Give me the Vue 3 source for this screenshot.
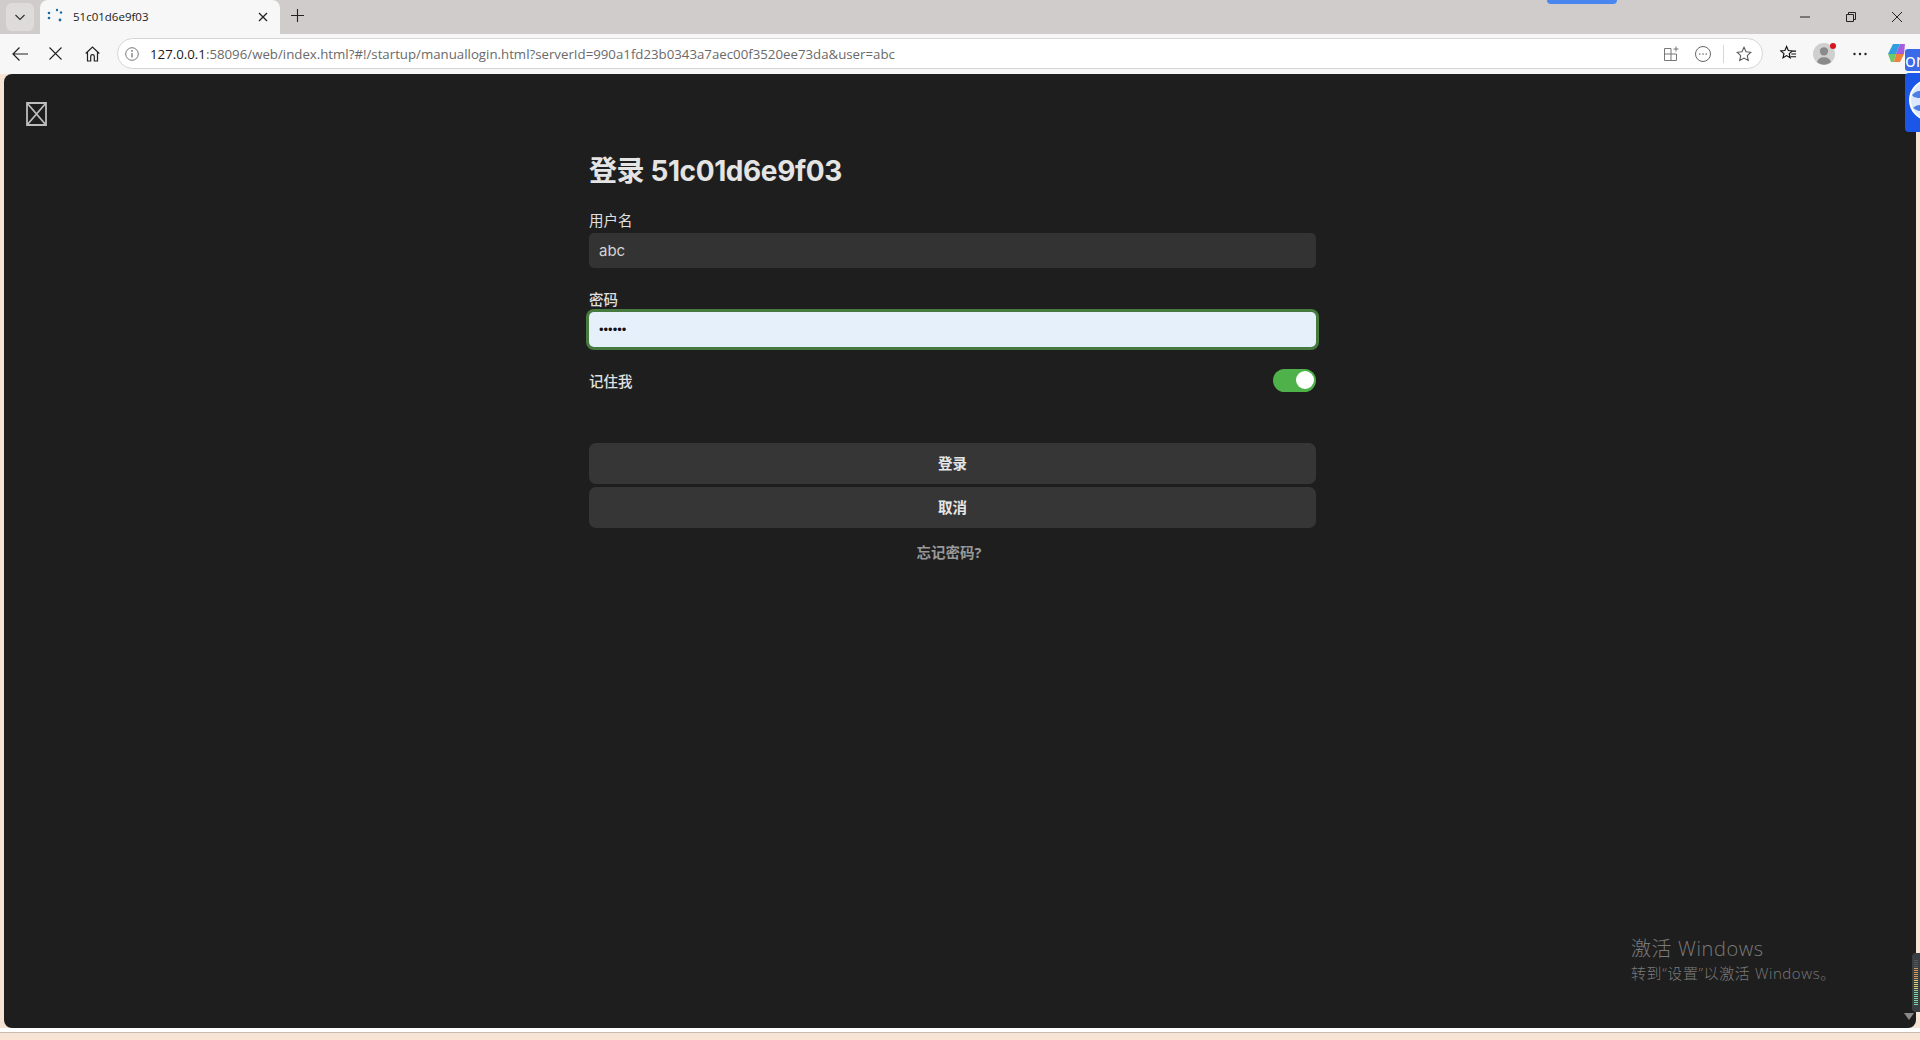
<script setup>
const ticks = Array.from({ length: 23 }, (_, i) =>
  i < 4 ? 'off' : i < 10 ? 'warm' : i < 15 ? 'yellow' : 'green'
)
</script>

<template>
  <div class="window">
    <div class="tabstrip">
      <div class="tabmenu">
        <svg width="14" height="14" viewBox="0 0 14 14"><path d="M2.5 5 7 9.5 11.5 5" fill="none" stroke="#333" stroke-width="1.2"/></svg>
      </div>
      <div class="tab">
        <svg class="spinner" width="16" height="16" viewBox="0 0 16 16" fill="#1d6a9e">
          <circle cx="2" cy="5" r="1.3"/><circle cx="2" cy="10" r="1.3"/><circle cx="10" cy="2" r="1.2"/><circle cx="14" cy="4.5" r="1.2"/><circle cx="13" cy="12" r="1.4"/>
        </svg>
        <span class="tabtitle">51c01d6e9f03</span>
        <svg class="tabclose" width="10" height="10" viewBox="0 0 10 10"><path d="M1 1l8 8M9 1L1 9" stroke="#222" stroke-width="1.3"/></svg>
      </div>
      <svg class="newtab" width="13" height="13" viewBox="0 0 13 13"><path d="M6.5 0v13M0 6.5h13" stroke="#222" stroke-width="1.1"/></svg>
      <div class="strip-space">
        <div class="pill"></div>
      </div>
      <div class="winbtns">
        <svg width="10" height="10" viewBox="0 0 10 10"><path d="M0 5h10" stroke="#222" stroke-width="1"/></svg>
        <svg width="10" height="10" viewBox="0 0 10 10"><path d="M.5 2.500h7v7h-7zM2.500 2.500V.5h7v7h-2" fill="none" stroke="#222" stroke-width="1"/></svg>
        <svg width="10" height="10" viewBox="0 0 10 10"><path d="M0 0l10 10M10 0L0 10" stroke="#222" stroke-width="1"/></svg>
      </div>
    </div>

    <div class="toolbar">
      <svg class="nav back" width="16" height="16" viewBox="0 0 16 16"><path d="M16 8H1M7.500 1.500 1 8l6.500 6.500" fill="none" stroke="#222" stroke-width="1.2"/></svg>
      <svg class="nav stop" width="13" height="13" viewBox="0 0 13 13"><path d="M.5.5l12 12M12.500.5l-12 12" stroke="#222" stroke-width="1.1"/></svg>
      <svg class="nav home" width="15" height="16" viewBox="0 0 15 16"><path d="M.7 7.500 7.500 1l6.800 6.500M2.500 6v9h3.200v-4.500a1.800 1.800 0 0 1 3.600 0V15h3.200V6" fill="none" stroke="#222" stroke-width="1.2"/></svg>
      <div class="address">
        <svg class="info" width="14" height="14" viewBox="0 0 14 14"><circle cx="7" cy="7" r="6.300" fill="none" stroke="#777" stroke-width="1"/><path d="M7 6v4.500" stroke="#777" stroke-width="1.300"/><circle cx="7" cy="3.900" r=".9" fill="#777"/></svg>
        <span class="url"><span class="host">127.0.0.1</span>:58096/web/index.html?#!/startup/manuallogin.html?serverId=990a1fd23b0343a7aec00f3520ee73da&amp;user=abc</span>
        <div class="addr-icons">
          <svg width="15" height="15" viewBox="0 0 15 15"><path d="M7 2.500H.5v12h12V8H.5M7 2.500v12M9.500 3h5M12 .5v5" fill="none" stroke="#777" stroke-width="1"/></svg>
          <svg class="circledots" width="16" height="16" viewBox="0 0 16 16"><circle cx="8" cy="8" r="7.500" fill="none" stroke="#666" stroke-width="1"/><circle cx="4.800" cy="8" r=".8" fill="#666"/><circle cx="8" cy="8" r=".8" fill="#666"/><circle cx="11.200" cy="8" r=".8" fill="#666"/></svg>
          <span class="addr-sep"></span>
          <svg width="16" height="16" viewBox="0 0 18 18"><path d="M9 1.500l2.300 5 5.400.6-4 3.700 1.100 5.400L9 13.500l-4.800 2.700 1.100-5.400-4-3.700 5.400-.6z" fill="none" stroke="#555" stroke-width="1.200"/></svg>
        </div>
      </div>
      <svg class="favs" width="17" height="17" viewBox="0 0 18 18"><path d="M7 1.500l1.800 4.300 4.400.4-3.400 2.900 1 4.400L7 11.200l-3.800 2.300 1-4.400L.8 6.200l4.400-.4zM11.500 6.500H17M12 9.500h5M11.500 12.500H17" fill="none" stroke="#111" stroke-width="1.200"/></svg>
      <div class="avatar">
        <svg width="22" height="22" viewBox="0 0 24 24"><circle cx="12" cy="12" r="12" fill="#cfcfcf"/><circle cx="12" cy="9" r="4.500" fill="#8a8a8a"/><path d="M4.500 21a7.500 5.500 0 0 1 15 0 12 12 0 0 1-15 0z" fill="#8a8a8a"/></svg>
        <span class="reddot"></span>
      </div>
      <svg class="more" width="14" height="4" viewBox="0 0 14 4" fill="#222"><circle cx="1.500" cy="2" r="1.200"/><circle cx="7" cy="2" r="1.200"/><circle cx="12.500" cy="2" r="1.200"/></svg>
      <svg class="copilot" width="19" height="21" viewBox="0 0 19 21">
        <path d="M6 1h7l-4 10H1z" fill="#2f9fe0"/><path d="M1 11h8l-2 8H4z" fill="#6cc86a"/><path d="M13 1h5l-1 10H9z" fill="#a45fe0"/><path d="M9 11h8l-4 8H7z" fill="#f07f3a"/>
      </svg>
    </div>

    <div class="stage">
      <svg class="brokenlogo" width="21" height="24" viewBox="0 0 21 24"><path d="M1 1h19v22H1zM1 1l19 22M20 1L1 23" fill="none" stroke="#bdbdbd" stroke-width="1.800"/></svg>
      <form class="login" @submit.prevent>
        <h1 class="title">登录 51c01d6e9f03</h1>
        <label class="lbl">用户名</label>
        <div class="input">abc</div>
        <label class="lbl lbl-pass">密码</label>
        <div class="input focused">••••••</div>
        <div class="remember">
          <span>记住我</span>
          <span class="switch"><span class="knob"></span></span>
        </div>
        <div class="btn first">登录</div>
        <div class="btn">取消</div>
        <div class="forgot">忘记密码?</div>
      </form>
      <div class="activate">
        <div class="a1">激活 Windows</div>
        <div class="a2">转到“设置”以激活 Windows。</div>
      </div>
    </div>
    <div class="white-strip"></div>
    <div class="wallpaper"></div>

    <div class="float-or">or</div>
    <div class="float-globe">
      <svg width="15" height="59" viewBox="0 0 15 59"><circle cx="25" cy="27" r="20" fill="#dce8fb" stroke="#fff" stroke-width="2"/><path d="M7 22c4-4 6-4 8-4v7c-3 0-6 0-8-3zM8 35c3 2 5 3 7 3v-6c-3 0-5 1-7 3z" fill="#4a7fe6"/></svg>
    </div>
    <div class="meter">
      <span v-for="(t, i) in ticks" :key="i" class="tick" :class="t"></span>
    </div>
    <div class="scroll-arrow"></div>
  </div>
</template>

<style>
html, body { margin: 0; background: #f7e4d4; }
</style>

<style scoped>
.window {
  position: relative;
  width: 1920px;
  height: 1040px;
  overflow: hidden;
  display: flex;
  flex-direction: column;
  font-family: "Open Sans", "Noto Sans CJK SC", sans-serif;
  background: #f7e4d4;
}
.tabstrip {
  height: 34px;
  flex: none;
  display: flex;
  align-items: flex-start;
  background: #cfcccb;
}
.tabmenu {
  width: 28px;
  height: 28px;
  margin: 3px 0 0 6px;
  border-radius: 6px;
  background: #dedcdb;
  display: flex;
  align-items: center;
  justify-content: center;
}
.tab {
  width: 240px;
  height: 34px;
  margin-left: 6px;
  box-sizing: border-box;
  padding: 0 12px 0 7px;
  background: #f7f7f7;
  border-radius: 8px 8px 0 0;
  display: flex;
  align-items: center;
  font-size: 11.5px;
  color: #222;
}
.spinner { flex: none; margin-top: -2px; }
.tabtitle { margin: -2px 0 0 10px; flex: 1; }
.newtab { margin: 9px 0 0 11px; flex: none; }
.strip-space { flex: 1; position: relative; }
.pill {
  position: absolute;
  left: 1243px;
  top: 0;
  width: 70px;
  height: 4px;
  background: #4a86f0;
  border-radius: 0 0 6px 6px;
}
.winbtns {
  width: 120px;
  height: 34px;
  flex: none;
  display: flex;
  align-items: center;
  gap: 36px;
}
.toolbar {
  height: 40px;
  flex: none;
  box-sizing: border-box;
  padding-bottom: 1px;
  display: flex;
  align-items: center;
  background: #f7f7f7;
}
.nav { flex: none; }
.back { margin-left: 12px; }
.stop { margin-left: 21px; }
.home { margin-left: 23px; }
.address {
  margin-left: 17px;
  width: 1646px;
  height: 31px;
  box-sizing: border-box;
  flex: none;
  background: #fff;
  border: 1px solid #d6d6d6;
  border-radius: 16px;
  display: flex;
  align-items: center;
  padding-left: 7px;
}
.info { flex: none; }
.url {
  margin-left: 11px;
  font-size: 13.25px;
  color: #6a6a6a;
  white-space: nowrap;
}
.host { color: #1a1a1a; }
.addr-icons {
  margin-left: auto;
  display: flex;
  align-items: center;
  padding-right: 10px;
}
.circledots { margin-left: 16px; }
.addr-sep { width: 1px; height: 18px; background: #d6d6d6; margin: 0 12px; }
.favs { margin-left: 17px; flex: none; }
.avatar { position: relative; margin-left: 16px; width: 22px; height: 22px; flex: none; }
.avatar svg { display: block; }
.reddot {
  position: absolute;
  right: -1px;
  top: 0;
  width: 6px;
  height: 6px;
  border-radius: 50%;
  background: #d9141e;
}
.more { margin-left: 18px; flex: none; }
.copilot { margin-left: 20px; flex: none; }
.stage {
  position: relative;
  margin: 0 4px;
  height: 954px;
  flex: none;
  background: #1e1e1e;
  border-radius: 8px;
  color: #e6e6e6;
}
.brokenlogo { position: absolute; left: 22px; top: 28px; }
.login {
  width: 727px;
  margin-left: 585px;
  padding-top: 77px;
  display: flex;
  flex-direction: column;
}
.title {
  margin: 0;
  font-family: Inter, "Noto Sans CJK SC", sans-serif;
  font-size: 28px;
  line-height: 40px;
  font-weight: 700;
  letter-spacing: -0.4px;
  color: #e4e4e4;
}
.lbl {
  margin-top: 22px;
  font-size: 14.5px;
  line-height: 16px;
  color: #e0e0e0;
}
.lbl.lbl-pass { margin-top: 24px; font-weight: 500; }
.input {
  height: 35px;
  margin-top: 4px;
  box-sizing: border-box;
  padding: 0 10px;
  background: #333333;
  border-radius: 5px;
  font-family: Inter, "Noto Sans CJK SC", sans-serif;
  font-size: 15px;
  line-height: 35px;
  color: #d4d4d4;
}
.focused {
  background: #e6f0fb;
  color: #111;
  font-family: "Liberation Sans", sans-serif;
  font-size: 13px;
  box-shadow: 0 0 0 3px #467a3e;
}
.remember {
  margin-top: 21px;
  height: 24px;
  display: flex;
  align-items: center;
  justify-content: space-between;
  font-size: 14.5px;
  font-weight: 500;
  color: #e0e0e0;
}
.switch {
  width: 43px;
  height: 23px;
  box-sizing: border-box;
  padding: 2.5px;
  background: #4fb14a;
  border-radius: 12px;
  display: flex;
  justify-content: flex-end;
}
.knob { width: 18px; height: 18px; border-radius: 50%; background: #fff; }
.btn {
  height: 41px;
  margin-top: 3px;
  box-sizing: border-box;
  padding-bottom: 2px;
  background: #363636;
  border-radius: 7px;
  display: flex;
  align-items: center;
  justify-content: center;
  font-size: 14.5px;
  font-weight: 700;
  color: #e6e6e6;
}
.btn.first { margin-top: 51px; }
.forgot {
  margin-top: 14px;
  text-align: center;
  padding-right: 7px;
  font-size: 14.5px;
  line-height: 22px;
  font-weight: 700;
  color: #999;
}
.activate {
  position: absolute;
  left: 1627px;
  top: 862px;
  color: #7a7a7a;
  font-family: "Open Sans", "Noto Sans CJK SC", sans-serif;
  white-space: nowrap;
}
.a1 { font-size: 20px; line-height: 26px; font-weight: 300; letter-spacing: 0.6px; }
.a2 { font-size: 15px; line-height: 22px; font-weight: 300; letter-spacing: 0.6px; }
.white-strip { height: 4px; flex: none; background: #fff; }
.wallpaper { flex: 1; background: #f8e4d4; border-top: 1px solid #c9bbb0; }
.float-or {
  position: absolute;
  left: 1905px;
  top: 49px;
  width: 15px;
  height: 22px;
  background: #3b6ae8;
  border-radius: 3px 0 0 3px;
  color: #fff;
  font-size: 18px;
  line-height: 22px;
  overflow: hidden;
}
.float-globe {
  position: absolute;
  left: 1905px;
  top: 73px;
  width: 15px;
  height: 59px;
  background: #1a56e8;
  border-radius: 4px 0 0 4px;
  overflow: hidden;
}
.float-globe svg { display: block; }
.meter {
  position: absolute;
  left: 1912px;
  top: 953px;
  width: 8px;
  height: 59px;
  background: #3a3f44;
  border-radius: 4px 0 0 4px;
  display: flex;
  flex-direction: column;
  gap: 1px;
  padding: 7px 0 0 2px;
  box-sizing: border-box;
}
.tick { display: block; width: 4px; height: 1px; flex: none; }
.tick.off { background: #555; }
.tick.warm { background: #d49a5a; }
.tick.yellow { background: #d8d27a; }
.tick.green { background: #7fd6a0; }
.scroll-arrow {
  position: absolute;
  left: 1904px;
  top: 1013px;
  width: 0;
  height: 0;
  border-left: 5px solid transparent;
  border-right: 5px solid transparent;
  border-top: 7px solid #8a8a8a;
}
</style>
